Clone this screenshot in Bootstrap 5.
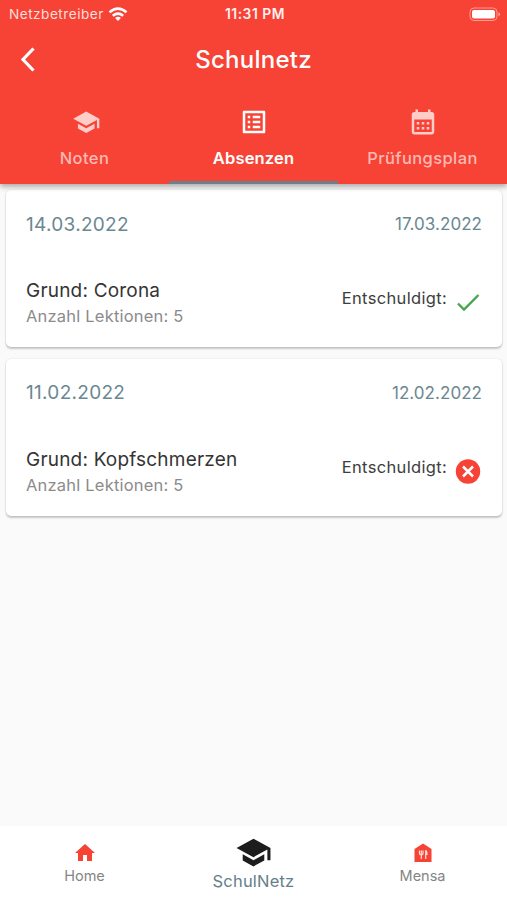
<!DOCTYPE html>
<html lang="de">
<head>
<meta charset="utf-8">
<meta name="viewport" content="width=device-width, initial-scale=1">
<title>Schulnetz</title>
<link href="https://cdn.jsdelivr.net/npm/bootstrap@5.3.0/dist/css/bootstrap.min.css" rel="stylesheet">
<style>
body{font-family:Inter,"Liberation Sans",sans-serif;background:#fafafa;color:#353535;height:900px;overflow:hidden}
svg{display:block;flex:none}
.app-top{background:#f64336;color:#fff;height:184px;box-shadow:0 3px 5px rgba(0,0,0,.3);z-index:2}
.status{height:27px;padding:0 6px 0 9px;font-size:13.6px;line-height:28px}
.carrier{color:#ffdedb;letter-spacing:.5px}
.clock{font-weight:600;font-size:13.8px;color:#fff0ee;letter-spacing:.55px}
.titlebar{height:60px;padding:4px 20px 0}
.titlebar h1{font-size:24px;font-weight:500;letter-spacing:.25px;line-height:30px;padding-top:1px}
.tabs{height:97px}
.tabs .nav-link{color:#ffb9b3;font-size:16.5px;font-weight:500;line-height:22px;padding:20px 0 0;letter-spacing:.4px;border-bottom:3px solid transparent;border-radius:0;height:97px}
.tabs .nav-link.active{color:#fff;font-weight:600;letter-spacing:.15px;border-bottom-color:#6d7f8a}
.tab-icon{height:30px;margin-bottom:10px}
.entries{padding:6px 5px 0 6px}
.entry{height:157px;border:0;border-radius:5px;margin-bottom:11.5px;padding:20px 20px 19px;box-shadow:0 2px 2px rgba(0,0,0,.2),0 0 2px rgba(0,0,0,.13)}
.dates{color:#6b8791;height:30px}
.from{font-size:19px;letter-spacing:.3px}
.until{font-size:17px;letter-spacing:.05px}
.reason{font-size:19px;line-height:26px;color:#343434;letter-spacing:.2px}
.lessons{font-size:16.5px;line-height:24px;color:#8b8b8b;letter-spacing:.2px}
.excused{font-size:16.5px;line-height:24px;color:#3d3d3d}
.excused span{letter-spacing:.33px}
.excused svg{margin-top:3px}
.bottom-nav{height:74px;background:#fff;color:#858585;font-size:14.5px}
.bottom-nav .nav-link{color:#858585;padding:0;line-height:22px}
.bottom-nav .nav-link.active{color:#65808b;font-size:16.5px;line-height:20px;padding-top:8px;letter-spacing:.2px}
.bottom-nav .nav-item-side{padding-top:15px}
</style>
</head>
<body class="d-flex flex-column">
<header class="app-top position-relative">
  <div class="status row g-0 align-items-center">
    <div class="col d-flex align-items-center gap-1">
      <span class="carrier">Netzbetreiber</span>
      <svg width="20" height="15" viewBox="0 0 20 15" fill="none" stroke="#fff" stroke-width="2.5"><path d="M1.500 5.300Q10-2 18.500 5.300M4.800 8.800Q10 4.500 15.200 8.800"/><path d="M10 14l-2.900-3Q10 8.600 12.900 11z" fill="#fff" stroke="none"/></svg>
    </div>
    <div class="col-auto clock">11:31 PM</div>
    <div class="col d-flex justify-content-end">
      <svg width="32" height="15" viewBox="0 0 32 15"><rect x="1" y="1" width="27" height="12.500" rx="4" fill="none" stroke="#ff9c94"/><rect x="3" y="3" width="23" height="8.500" rx="2" fill="#fff"/><path d="M29.500 5v4.500q3-2.200 0-4.500" fill="#ffb0a9"/></svg>
    </div>
  </div>
  <div class="titlebar row g-0 align-items-center">
    <div class="col"><a href="#" aria-label="Zurück"><svg width="16" height="26" viewBox="0 0 16 26" fill="none" stroke="#fff" stroke-width="3.200"><path d="M13.500 2.500L3 13.500l10.500 11"/></svg></a></div>
    <h1 class="col-auto m-0">Schulnetz</h1>
    <div class="col"></div>
  </div>
  <ul class="nav nav-fill tabs row g-0">
    <li class="nav-item col-4"><a href="#" class="nav-link"><span class="tab-icon d-flex justify-content-center align-items-center ps-1"><svg width="28.500" height="28.500" viewBox="0 0 24 24" fill="#ffccc8"><path d="M5 13.180v4L12 21l7-3.820v-4L12 17l-7-3.820zM12 3L1 9l11 6 9-4.910V17h2V9L12 3z"/></svg></span>Noten</a></li>
    <li class="nav-item col-4"><a href="#" class="nav-link active"><span class="tab-icon d-flex justify-content-center align-items-center"><svg width="30" height="30" viewBox="0 0 24 24" fill="currentColor"><path d="M19 5v14H5V5h14m1.100-2H3.900c-.5 0-.9.4-.9.900v16.200c0 .4.400.9.900.9h16.200c.4 0 .9-.5.900-.9V3.900c0-.5-.5-.9-.9-.9zM11 7h6v2h-6V7zm0 4h6v2h-6v-2zm0 4h6v2h-6zM7 7h2v2H7zm0 4h2v2H7zm0 4h2v2H7z"/></svg></span>Absenzen</a></li>
    <li class="nav-item col-4"><a href="#" class="nav-link"><span class="tab-icon d-flex justify-content-center align-items-center"><svg width="30" height="30" viewBox="0 0 24 24" fill="#ffccc8"><path fill-rule="evenodd" d="M19 4h-1V2h-2v2H8V2H6v2H5c-1.110 0-1.990.9-1.990 2L3 20c0 1.100.890 2 2 2h14c1.100 0 2-.9 2-2V6c0-1.100-.9-2-2-2zm0 16H5V10h14v10zM7 12h2v2H7zm4 0h2v2h-2zm4 0h2v2h-2zM7 16h2v2H7zm4 0h2v2h-2zm4 0h2v2h-2z"/></svg></span>Prüfungsplan</a></li>
  </ul>
</header>

<main class="entries flex-grow-1">
  <article class="card entry">
    <div class="dates d-flex justify-content-between align-items-center"><span class="from">14.03.2022</span><span class="until">17.03.2022</span></div>
    <div class="d-flex justify-content-between mt-auto">
      <div><div class="reason">Grund: Corona</div><div class="lessons">Anzahl Lektionen: 5</div></div>
      <div class="excused d-flex pt-2 gap-2"><span>Entschuldigt:</span><svg width="27" height="27" viewBox="0 0 27 27" fill="none" stroke="#43a64b" stroke-width="2.300"><path d="M3 14.500l6 6L23.500 6"/></svg></div>
    </div>
  </article>
  <article class="card entry">
    <div class="dates d-flex justify-content-between align-items-center"><span class="from">11.02.2022</span><span class="until">12.02.2022</span></div>
    <div class="d-flex justify-content-between mt-auto">
      <div><div class="reason">Grund: Kopfschmerzen</div><div class="lessons">Anzahl Lektionen: 5</div></div>
      <div class="excused d-flex pt-2 gap-2"><span>Entschuldigt:</span><svg width="27" height="27" viewBox="0 0 27 27"><circle cx="13" cy="13.500" r="12.200" fill="#f64336"/><path d="M8 8.500l10 10m0-10l-10 10" stroke="#fff" stroke-width="2.500"/></svg></div>
    </div>
  </article>
</main>

<nav class="bottom-nav nav nav-fill row g-0 text-center">
  <a href="#" class="nav-link nav-item-side col-4 d-flex flex-column align-items-center"><svg width="24" height="24" viewBox="0 0 24 24" fill="#f64336"><path d="M10 20v-6h4v6h5v-8h3L12 3 2 12h3v8z"/></svg><span>Home</span></a>
  <a href="#" class="nav-link active col-4 d-flex flex-column align-items-center"><svg width="37" height="37" viewBox="0 0 24 24" fill="#1d1d1d"><path d="M5 13.180v4L12 21l7-3.820v-4L12 17l-7-3.820zM12 3L1 9l11 6 9-4.910V17h2V9L12 3z"/></svg><span>SchulNetz</span></a>
  <a href="#" class="nav-link nav-item-side col-4 d-flex flex-column align-items-center"><svg width="24" height="24" viewBox="0 0 24 24"><path d="M12 2.500L20.500 8v13h-17V8z" fill="#f64336"/><path d="M8.500 9.500v3q0 1.500 1.800 1.500V18M10.300 9.500V14M12 9.500v3q0 1.500-1.700 1.500M14.700 18V9.500q1.300 0 1.300 4h-1.300" fill="none" stroke="#ffe0dd" stroke-width="1.200"/></svg><span>Mensa</span></a>
</nav>
<script src="https://cdn.jsdelivr.net/npm/bootstrap@5.3.0/dist/js/bootstrap.bundle.min.js"></script>
</body>
</html>
